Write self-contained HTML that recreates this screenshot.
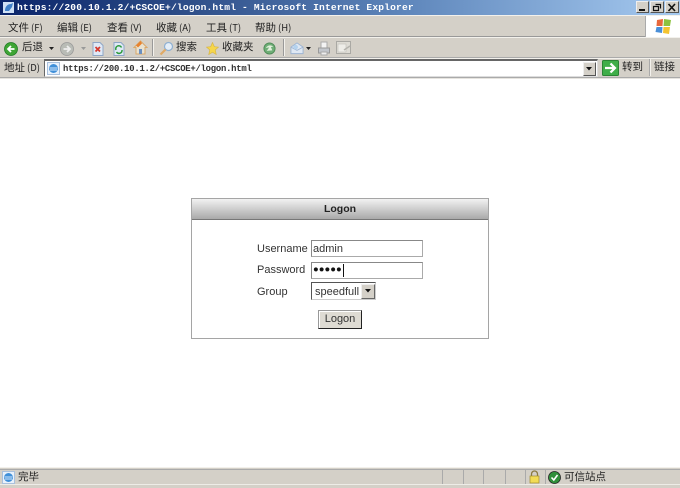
<!DOCTYPE html>
<html>
<head>
<meta charset="utf-8">
<style>
html,body{margin:0;padding:0;background:#fff;}
body{width:680px;height:488px;overflow:hidden;position:relative;font-family:"Liberation Sans","Noto Sans CJK SC",sans-serif;}
#w{position:absolute;left:0;top:0;width:680px;height:488px;overflow:hidden;background:#fff;filter:blur(0.35px);}
#w div,#w span,#w svg{position:absolute;}
.t{white-space:nowrap;line-height:12px;}
.cn{font-family:"WenQuanYi Zen Hei","Noto Sans CJK SC",sans-serif;font-size:10.5px;color:#222;white-space:nowrap;line-height:12px;}
#w .cn span{position:static;font-size:9.5px;margin-left:2px;}
.f{font-size:11px;color:#333;white-space:nowrap;line-height:13px;}
</style>
</head>
<body>
<div id="w">
<!-- title bar -->
<div style="left:0;top:0;width:680px;height:15px;background:linear-gradient(90deg,#0a246a 0,#2a4a85 25%,#5f87bc 60%,#a6caf0 100%);"></div>
<svg style="left:2px;top:1px" width="13" height="13" viewBox="0 0 13 13"><rect x="1" y="1" width="11" height="11" fill="#cfe0f5"/><path d="M3 10C3 5 6 3 9 3L11 2 10 6 7 10Z" fill="#3f7fc8"/></svg>
<div class="t" style="left:17px;top:2px;font-family:'Liberation Mono',monospace;font-weight:bold;font-size:9.6px;color:#fff;letter-spacing:0.165px;">https://200.10.1.2/+CSCOE+/logon.html - Microsoft Internet Explorer</div>
<!-- window buttons -->
<div style="left:636px;top:1px;width:13px;height:12px;background:#d4d0c8;border:1px solid;border-color:#eee #555 #555 #eee;box-sizing:border-box;"></div>
<div style="left:639px;top:9px;width:6px;height:2px;background:#111;"></div>
<div style="left:650px;top:1px;width:14px;height:12px;background:#d4d0c8;border:1px solid;border-color:#eee #555 #555 #eee;box-sizing:border-box;"></div>
<svg style="left:652px;top:2px" width="10" height="10" viewBox="0 0 10 10"><path d="M3.500 2.500H8.500V6.500M1.500 4.500H6.500V8.500H1.500Z" fill="none" stroke="#111" stroke-width="1.200"/></svg>
<div style="left:665px;top:1px;width:14px;height:12px;background:#d4d0c8;border:1px solid;border-color:#eee #555 #555 #eee;box-sizing:border-box;"></div>
<svg style="left:667px;top:3px" width="10" height="9" viewBox="0 0 10 9"><path d="M1.500 1L8 8M8 1L1.500 8" stroke="#111" stroke-width="1.600"/></svg>
<!-- chrome background -->
<div style="left:0;top:15px;width:680px;height:63px;background:#d4d0c8;"></div>
<div style="left:0;top:15px;width:680px;height:1px;background:#f3f1ec;"></div>
<div style="left:0;top:36px;width:680px;height:1px;background:#999;"></div>
<div style="left:0;top:37px;width:680px;height:1px;background:#f3f1ec;"></div>
<div style="left:0;top:57px;width:680px;height:1px;background:#aaa;"></div>
<div style="left:0;top:58px;width:680px;height:1px;background:#f3f1ec;"></div>
<div style="left:0;top:77px;width:680px;height:1px;background:#aaa;"></div>
<div style="left:0;top:78px;width:680px;height:1px;background:#e6e4df;"></div>
<!-- menu -->
<div class="cn" style="left:8px;top:21px;">文件<span>(F)</span></div>
<div class="cn" style="left:57px;top:21px;">编辑<span>(E)</span></div>
<div class="cn" style="left:107px;top:21px;">查看<span>(V)</span></div>
<div class="cn" style="left:156px;top:21px;">收藏<span>(A)</span></div>
<div class="cn" style="left:206px;top:21px;">工具<span>(T)</span></div>
<div class="cn" style="left:255px;top:21px;">帮助<span>(H)</span></div>
<!-- windows flag -->
<div style="left:645px;top:16px;width:35px;height:21px;background:#fff;border-left:1px solid #aaa;box-sizing:border-box;"></div>
<svg style="left:654px;top:18px" width="18" height="17" viewBox="0 0 18 17"><path d="M3 2L9 1 8.500 8 2.500 8Z" fill="#e8683c"/><path d="M10 1L17 2 16 8 9.500 8Z" fill="#8cc23f"/><path d="M2.500 9L8.500 9 8 15 1.500 14Z" fill="#4a8fd8"/><path d="M9.500 9L16 9 15 16 9 15Z" fill="#f4c430"/></svg>
<!-- toolbar -->
<svg style="left:4px;top:42px" width="14" height="14" viewBox="0 0 14 14"><circle cx="7" cy="7" r="6.500" fill="#3fa535" stroke="#1f7a25" stroke-width=".8"/><path d="M10.500 7H4.500M7 4L4 7 7 10" fill="none" stroke="#fff" stroke-width="1.800"/></svg>
<div class="cn" style="left:22px;top:41px;">后退</div>
<svg style="left:49px;top:47px" width="6" height="4"><path d="M0 0H5L2.500 3Z" fill="#222"/></svg>
<svg style="left:60px;top:42px" width="14" height="14" viewBox="0 0 14 14"><circle cx="7" cy="7" r="6.500" fill="#b9bcb6" stroke="#999" stroke-width=".8"/><path d="M3.500 7H9.500M7 4L10 7 7 10" fill="none" stroke="#eee" stroke-width="1.800"/></svg>
<svg style="left:81px;top:47px" width="6" height="4"><path d="M0 0H5L2.500 3Z" fill="#999"/></svg>
<svg style="left:92px;top:42px" width="12" height="14" viewBox="0 0 12 14"><path d="M1 .500H8L11 3.500V13.500H1Z" fill="#dfe9f6" stroke="#8fa6c6"/><path d="M3.500 5L8 9.500M8 5L3.500 9.500" stroke="#d63a2f" stroke-width="1.800"/></svg>
<svg style="left:113px;top:42px" width="12" height="14" viewBox="0 0 12 14"><path d="M1 .500H8L11 3.500V13.500H1Z" fill="#dfe9f6" stroke="#8fa6c6"/><path d="M3 8A3 3 0 0 1 8.500 5.500M9 8A3 3 0 0 1 3.500 10" fill="none" stroke="#2d9b3c" stroke-width="1.500"/></svg>
<svg style="left:133px;top:40px" width="15" height="15" viewBox="0 0 15 15"><path d="M7.500 1L1 7.500H3V14H12V7.500H14Z" fill="#e9e2d0" stroke="#d9a86a"/><path d="M7.500 1L3 5.500 5 7.500 9 3.500Z" fill="#e8822e"/><rect x="6" y="9" width="3" height="5" fill="#6a8fc0"/></svg>
<div style="left:152px;top:39px;width:1px;height:17px;background:#999;"></div>
<div style="left:153px;top:39px;width:1px;height:17px;background:#f3f1ec;"></div>
<svg style="left:159px;top:41px" width="15" height="15" viewBox="0 0 15 15"><circle cx="9.500" cy="5.500" r="4" fill="#e4eef8" stroke="#8fb0d2" stroke-width="1.200"/><path d="M6.500 8.500L1.500 13.500" stroke="#e0aa65" stroke-width="2.200"/></svg>
<div class="cn" style="left:176px;top:41px;">搜索</div>
<svg style="left:206px;top:42px" width="13" height="13" viewBox="0 0 14 14"><path d="M7 .500L9 5 13.500 5.500 10 8.500 11 13.500 7 11 3 13.500 4 8.500 .500 5.500 5 5Z" fill="#f6d64a" stroke="#d6b547" stroke-width=".7"/></svg>
<div class="cn" style="left:222px;top:41px;">收藏夹</div>
<svg style="left:263px;top:42px" width="13" height="13" viewBox="0 0 14 14"><circle cx="7" cy="7" r="6" fill="#6fae76" stroke="#4f8a58"/><path d="M3 6.500C5 3 9 3 11 5M4 9.500L8 4 10 9Z" fill="#e2efdc"/></svg>
<div style="left:283px;top:39px;width:1px;height:17px;background:#999;"></div>
<div style="left:284px;top:39px;width:1px;height:17px;background:#f3f1ec;"></div>
<svg style="left:290px;top:41px" width="14" height="15" viewBox="0 0 15 15"><path d="M1 6L7.500 1.500 14 6V13H1Z" fill="#dfe8f3" stroke="#9db4d2"/><path d="M1 6L7.500 9.500 14 6" fill="none" stroke="#9db4d2"/><circle cx="6" cy="6" r="2.500" fill="#b4d2ee"/></svg>
<svg style="left:306px;top:47px" width="6" height="4"><path d="M0 0H5L2.500 3Z" fill="#222"/></svg>
<svg style="left:317px;top:41px" width="14" height="15" viewBox="0 0 14 15"><rect x="4" y="1" width="6" height="6" fill="#f3f3f3" stroke="#aaa"/><rect x="1.500" y="7" width="11" height="5" fill="#c2c6cc" stroke="#999"/><rect x="4" y="11" width="6" height="3" fill="#eee" stroke="#aaa"/></svg>
<svg style="left:336px;top:41px" width="16" height="14" viewBox="0 0 16 14"><rect x=".5" y=".5" width="14" height="12" fill="#dedcd5" stroke="#aaa9a4"/><rect x="2" y="3" width="8" height="8" fill="#eeede8" stroke="#c0bfba" stroke-width=".6"/><path d="M8 9L14 5" stroke="#b5b4ae" stroke-width="1.500"/></svg>
<!-- address bar -->
<div class="cn" style="left:4px;top:61px;">地址<span>(D)</span></div>
<div style="left:44px;top:59px;width:554px;height:18px;background:#fff;border:1px solid;border-color:#666 #ddd #ddd #666;border-top-width:2px;box-sizing:border-box;"></div>
<svg style="left:47px;top:62px" width="13" height="13" viewBox="0 0 13 13"><rect x=".5" y=".5" width="12" height="12" fill="#e8f1fb" stroke="#a9c0dc"/><circle cx="6.500" cy="6.500" r="4.500" fill="#3f8fd8"/><path d="M2.500 6H10.500M3 8H10" stroke="#d7eafb"/></svg>
<div class="t" style="left:63px;top:63px;font-family:'Liberation Mono',monospace;font-size:8.900px;font-weight:bold;color:#333;letter-spacing:-0.23px;">https://200.10.1.2/+CSCOE+/logon.html</div>
<div style="left:583px;top:62px;width:13px;height:14px;background:#d4d0c8;border:1px solid;border-color:#eee #555 #555 #eee;box-sizing:border-box;"></div>
<svg style="left:586px;top:67px" width="7" height="4"><path d="M0 0H6L3 3.500Z" fill="#111"/></svg>
<svg style="left:602px;top:60px" width="17" height="16" viewBox="0 0 17 16"><rect x=".5" y=".5" width="16" height="15" rx="1" fill="#3fae49" stroke="#2a8435"/><path d="M3 8H12M8.500 3.500L13 8 8.500 12.500" fill="none" stroke="#fff" stroke-width="2.200"/></svg>
<div class="cn" style="left:622px;top:61px;">转到</div>
<div style="left:649px;top:59px;width:1px;height:17px;background:#aaa;"></div>
<div style="left:650px;top:59px;width:1px;height:17px;background:#f3f1ec;"></div>
<div class="cn" style="left:654px;top:61px;">链接</div>
<!-- logon panel -->
<div style="left:191px;top:198px;width:298px;height:141px;border:1px solid #a5a5a5;box-sizing:border-box;background:#fff;"></div>
<div style="left:192px;top:199px;width:296px;height:21px;background:linear-gradient(#f2f2f2,#a9a9a9);border-bottom:1px solid #777;box-sizing:border-box;"></div>
<div class="t" style="left:192px;top:203px;width:296px;text-align:center;font-size:10.500px;font-weight:bold;color:#222;">Logon</div>
<div class="f" style="left:257px;top:243px;">Username</div>
<div class="f" style="left:257px;top:264px;">Password</div>
<div class="f" style="left:257px;top:286px;">Group</div>
<div style="left:311px;top:240px;width:112px;height:17px;border:1px solid;border-color:#888 #aaa #aaa #888;box-sizing:border-box;background:#fff;"></div>
<div class="f" style="left:313px;top:243px;">admin</div>
<div style="left:311px;top:262px;width:112px;height:17px;border:1px solid;border-color:#888 #aaa #aaa #888;box-sizing:border-box;background:#fff;"></div>
<div class="t" style="left:313px;top:264px;font-size:9.500px;color:#111;line-height:12px;">●●●●●</div>
<div style="left:343px;top:264px;width:1px;height:13px;background:#111;"></div>
<div style="left:311px;top:282px;width:65px;height:18px;border:1px solid;border-color:#555 #ccc #ccc #555;box-sizing:border-box;background:#fff;"></div>
<div class="f" style="left:315px;top:286px;">speedfull</div>
<div style="left:361px;top:284px;width:14px;height:15px;background:#d4d0c8;border:1px solid;border-color:#eee #666 #666 #eee;box-sizing:border-box;"></div>
<svg style="left:365px;top:289px" width="7" height="4"><path d="M0 0H6L3 3.500Z" fill="#111"/></svg>
<div style="left:318px;top:310px;width:44px;height:19px;background:#dedbd3;border:1px solid;border-color:#999 #222 #222 #999;box-shadow:inset 1px 1px 0 #fff;box-sizing:border-box;"></div>
<div class="f" style="left:318px;top:313px;width:44px;text-align:center;">Logon</div>
<!-- status bar -->
<div style="left:0;top:467px;width:680px;height:21px;background:#d4d0c8;"></div>
<div style="left:0;top:467px;width:680px;height:1px;background:#f3f1ec;"></div>
<div style="left:0;top:469px;width:680px;height:1px;background:#aaa;"></div>
<div style="left:0;top:484px;width:680px;height:1px;background:#eeece7;"></div>
<svg style="left:2px;top:471px" width="13" height="13" viewBox="0 0 13 13"><rect x=".5" y=".5" width="12" height="12" fill="#e8f1fb" stroke="#a9c0dc"/><circle cx="6.500" cy="6.500" r="4.500" fill="#3f8fd8"/><path d="M2.500 6H10.500M3 8H10" stroke="#d7eafb"/></svg>
<div class="cn" style="left:18px;top:471px;">完毕</div>
<div style="left:442px;top:470px;width:1px;height:14px;background:#aaa;"></div>
<div style="left:463px;top:470px;width:1px;height:14px;background:#aaa;"></div>
<div style="left:483px;top:470px;width:1px;height:14px;background:#aaa;"></div>
<div style="left:505px;top:470px;width:1px;height:14px;background:#aaa;"></div>
<div style="left:525px;top:470px;width:1px;height:14px;background:#aaa;"></div>
<div style="left:545px;top:470px;width:1px;height:14px;background:#aaa;"></div>
<svg style="left:528px;top:470px" width="13" height="14" viewBox="0 0 13 14"><path d="M3.500 6V4A3 3 0 0 1 9.500 4V6" fill="none" stroke="#8a7a40" stroke-width="1.300"/><rect x="2" y="6" width="9" height="7" fill="#f2dc55" stroke="#a08c30" stroke-width=".7"/></svg>
<svg style="left:548px;top:471px" width="13" height="13" viewBox="0 0 13 13"><circle cx="6.500" cy="6.500" r="6" fill="#2f8f3a" stroke="#222" stroke-width=".8"/><path d="M3.500 6.500L5.800 9 9.500 4" fill="none" stroke="#fff" stroke-width="1.600"/></svg>
<div class="cn" style="left:564px;top:471px;">可信站点</div>
</div>
</body>
</html>
